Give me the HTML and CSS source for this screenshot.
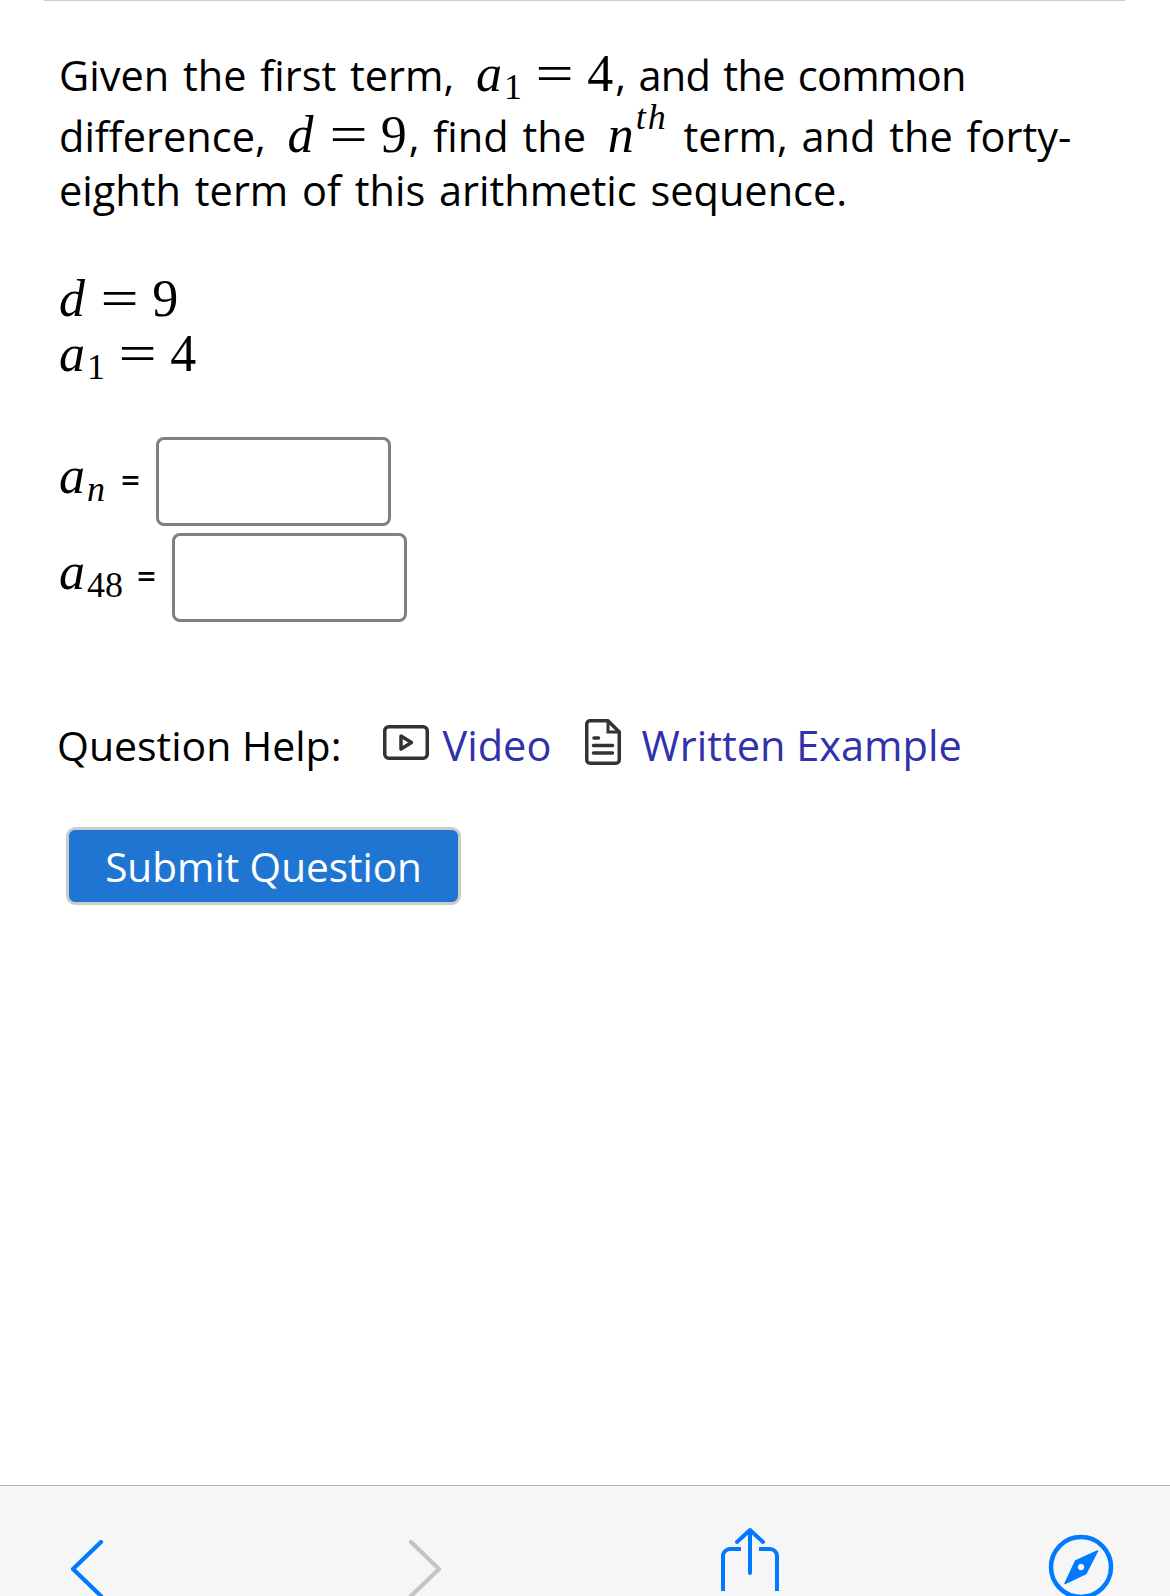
FILE: index.html
```html
<!DOCTYPE html>
<html lang="en">
<head>
  <meta charset="UTF-8" />
  <title>Question</title>
  <link rel="stylesheet" href="styles.css">
</head>
<body>
  <div class="main">
    <div class="question">
      <p class="prompt">Given the first term, <span class="math"><i>a</i><sub>1</sub><span class="eq">=</span>4</span><span class="tight">, and the common</span><br>difference, <span class="math"><i>d</i><span class="eq">=</span>9</span>, find the <span class="math"><i>n</i><sup><i>th</i></sup></span> term, and the forty-<br>eighth term of this arithmetic sequence.</p>

      <div class="given">
        <div class="math"><i>d</i><span class="eq">=</span>9</div>
        <div class="math"><i>a</i><sub>1</sub><span class="eq">=</span>4</div>
      </div>

      <div class="answers">
        <div class="answer">
          <span class="math answer-label"><i>a</i><sub><i>n</i></sub></span>
          <span class="equals">=</span>
          <input class="answer-box" type="text" />
        </div>
        <div class="answer">
          <span class="math answer-label"><i>a</i><sub>48</sub></span>
          <span class="equals">=</span>
          <input class="answer-box" type="text" />
        </div>
      </div>

      <div class="help">
        <span class="help-label">Question Help:</span>
        <a class="help-link" href="#">
          <svg class="help-icon" viewBox="0 0 46 35" width="46" height="35">
            <rect x="1.75" y="1.75" width="42.5" height="31.5" rx="4" fill="none" stroke="#333" stroke-width="3.5"/>
            <path d="M18 11 L28.5 17.5 L18 24 Z" fill="none" stroke="#333" stroke-width="3.5" stroke-linejoin="round"/>
          </svg>
          Video
        </a>
        <a class="help-link help-link-doc" href="#">
          <svg class="help-icon" viewBox="0 0 36 46" width="36" height="46">
            <path d="M5 1.75 H23 L34.25 13 V41 a3.25 3.25 0 0 1 -3.25 3.25 H5 a3.25 3.25 0 0 1 -3.25 -3.25 V5 a3.25 3.25 0 0 1 3.25 -3.25 Z" fill="none" stroke="#333" stroke-width="3.5" stroke-linejoin="round"/>
            <path d="M23 3 V13 H33" fill="none" stroke="#333" stroke-width="3"/>
            <path d="M9 19 H13.5 M8.5 26.5 H27.5 M8.5 34 H27.5" fill="none" stroke="#333" stroke-width="3.6" stroke-linecap="round"/>
          </svg>
          Written Example
        </a>
      </div>

      <button class="submit-btn" type="button">Submit Question</button>
    </div>
  </div>

  <div class="toolbar">
    <svg class="tool tool-back" viewBox="0 0 34 60" width="34" height="60">
      <path d="M31 2 L3 29 L31 56" fill="none" stroke="#007aff" stroke-width="4.2" stroke-linecap="round" stroke-linejoin="round"/>
    </svg>
    <svg class="tool tool-forward" viewBox="0 0 34 60" width="34" height="60">
      <path d="M3 2 L31 29 L3 56" fill="none" stroke="#c4c4c4" stroke-width="4.2" stroke-linecap="round" stroke-linejoin="round"/>
    </svg>
    <svg class="tool tool-share" viewBox="0 0 58 70" width="58" height="70">
      <path d="M29 3 V46 M16 15 L29 3 L42 15" fill="none" stroke="#007aff" stroke-width="4" stroke-linecap="round" stroke-linejoin="round"/>
      <path d="M20 22 H9 a7 7 0 0 0 -7 7 V64 M38 22 H49 a7 7 0 0 1 7 7 V64" fill="none" stroke="#007aff" stroke-width="4"/>
    </svg>
    <svg class="tool tool-compass" viewBox="0 0 66 66" width="66" height="66">
      <circle cx="33" cy="33" r="30" fill="none" stroke="#007aff" stroke-width="4.5"/>
      <path fill-rule="evenodd" d="M49.5 17 L38 39.5 L17 49.5 L27.5 27 Z M33 29 a4 4 0 1 0 0.01 0 Z" fill="#007aff" stroke="#007aff" stroke-width="1.5" stroke-linejoin="round"/>
    </svg>
  </div>
</body>
</html>
```

FILE: styles.css
```css
* {
  box-sizing: border-box;
}

html, body {
  margin: 0;
  padding: 0;
  height: 100%;
  background: #fff;
}

body {
  display: flex;
  flex-direction: column;
  overflow: hidden;
  font-family: 'Open Sans', 'Liberation Sans', sans-serif;
  color: #000;
}

.main {
  flex: 1;
  margin: 0 45px 0 44px;
  border-top: 1px solid #ccc;
}

.question {
  padding: 46px 15px 0;
  font-size: 42px;
}

.prompt {
  margin: 0;
  font-size: 41.5px;
  line-height: 54px;
  word-spacing: 3px;
}

.tight {
  letter-spacing: -0.7px;
}

.math {
  font-family: 'Liberation Serif', serif;
  font-size: 52px;
  line-height: 55px;
}

.prompt .math {
  margin: 0 2px 0 8px;
  line-height: 54px;
  word-spacing: 0;
}

.math i {
  letter-spacing: 2px;
}

.math sub,
.math sup {
  font-size: 36px;
  line-height: 0;
}

.math sub {
  vertical-align: -8px;
}

.math sup {
  line-height: 30px;
  vertical-align: 23px;
}

.eq {
  display: inline-block;
  margin: 0 18px;
  transform: scaleX(1.3);
}

.given {
  margin-top: 54px;
}

.answers {
  margin-top: 56px;
}

.answer {
  display: flex;
  align-items: center;
  gap: 14px;
  height: 89px;
  margin-bottom: 7px;
}

.answer-label {
  margin-top: -12px;
}

.equals {
  margin-top: -4px;
  margin-right: 2px;
  font-size: 33px;
  font-weight: 600;
}

.answer-box {
  width: 235px;
  height: 89px;
  background: #fff;
  border: 3px solid #808080;
  border-radius: 8px;
}

.help {
  display: flex;
  align-items: center;
  margin-top: 95px;
  margin-left: -2px;
  font-size: 41px;
}

.help-label {
  margin-right: 42px;
}

.help-link {
  display: flex;
  align-items: center;
  gap: 13px;
  margin-right: 34px;
  font-size: 41.5px;
  color: #3131ab;
  text-decoration: none;
}

.help-link-doc {
  gap: 20px;
}

.help-icon {
  margin-bottom: 6px;
}

.submit-btn {
  display: block;
  width: 395px;
  height: 78px;
  margin: 54px 0 0 7px;
  padding: 0;
  background: #1f76d2;
  border: 3px solid #ccc;
  border-radius: 9px;
  color: #fff;
  font-size: 40.5px;
  font-family: inherit;
}

.toolbar {
  display: flex;
  height: 111px;
  background: #f6f6f6;
  border-top: 1px solid #b2b2b2;
}

.tool {
  flex: none;
}

.tool-back {
  margin: 54px 0 0 70px;
}

.tool-forward {
  margin: 54px 0 0 304px;
}

.tool-share {
  margin: 41px 0 0 279px;
}

.tool-compass {
  margin: 48px 0 0 269px;
}
```
